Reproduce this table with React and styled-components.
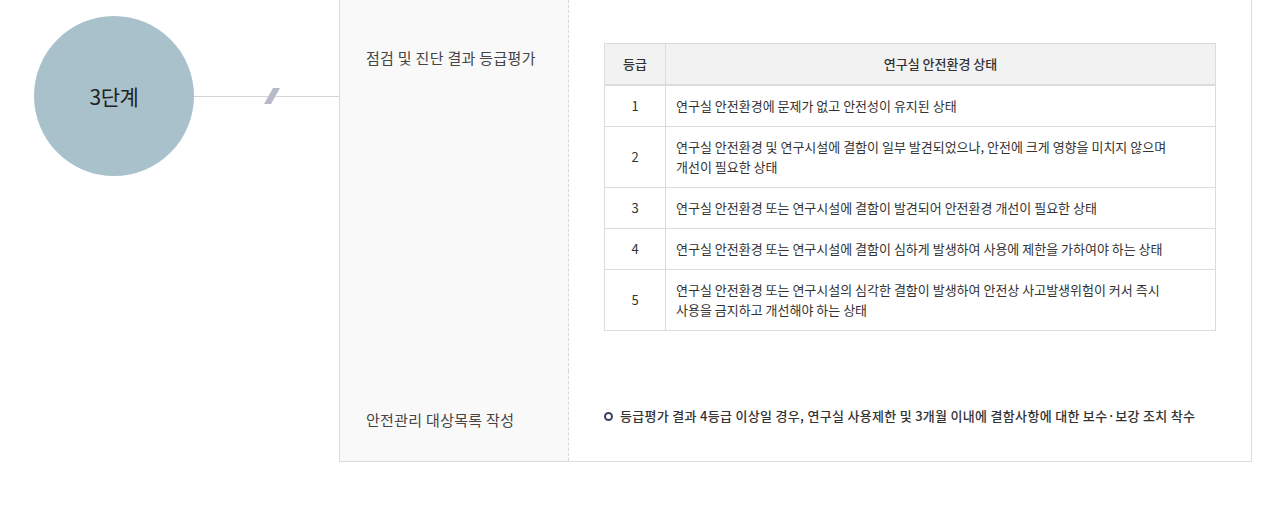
import React from 'react'
import styled, { createGlobalStyle } from 'styled-components'

const GlobalStyle = createGlobalStyle`
  body {
    margin: 0;
    background: #fff;
    font-family: "Noto Sans CJK KR", "Noto Sans", sans-serif;
    color: #333;
  }
`

const Stage = styled.div`
  width: 1263px;
  display: grid;
  grid-template-columns: 339px 913px;
  padding-bottom: 71px;
`

const Marker = styled.div`
  display: flex;
  align-items: center;
  height: 192px;
  padding-left: 34px;
`

const Circle = styled.div`
  width: 160px;
  height: 160px;
  flex: none;
  border-radius: 50%;
  background: #a8c1ca;
  display: flex;
  align-items: center;
  justify-content: center;
  font-size: 21px;
  color: #222;
  letter-spacing: -0.5px;
`

const Connector = styled.div`
  position: relative;
  flex: 1;
  height: 1px;
  background: #d4d4d4;
`

const Slash = styled.svg`
  position: absolute;
  left: 70px;
  top: -8px;
`

const Box = styled.div`
  display: grid;
  grid-template-columns: 229px 1fr;
  border: 1px solid #dcdcdc;
  border-top: none;
`

const Label = styled.div`
  background: #f9f9f9;
  border-right: 1px dashed #d8d8d8;
  padding: ${p => p.$top}px 26px 0;
  font-size: 15px;
  line-height: 20px;
  color: #444;
  letter-spacing: 0.3px;
`

const Content = styled.div`
  padding: ${p => p.$top}px 35px ${p => p.$bottom}px;
`

const Table = styled.table`
  width: 100%;
  border-collapse: collapse;
  border: 1px solid #dcdcdc;
  font-size: 13px;
  line-height: 20px;
  color: #333;
  word-break: keep-all;
`

const Th = styled.th`
  background: #f2f2f2;
  font-weight: 500;
  height: 40px;
  padding: 0 10px;
  border-right: 1px solid #dcdcdc;
  border-bottom: 2px solid #dcdcdc;
  width: ${p => p.$w || 'auto'};
`

const Td = styled.td`
  padding: 10px ${p => (p.$center ? 10 : 20)}px 10px 10px;
  border-right: 1px solid #dcdcdc;
  border-bottom: 1px solid #dcdcdc;
  text-align: ${p => (p.$center ? 'center' : 'left')};
`

const Bullet = styled.p`
  margin: 0;
  display: flex;
  align-items: center;
  gap: 7px;
  font-size: 13px;
  line-height: 20px;
  font-weight: 500;
  color: #333;
  letter-spacing: 0.3px;
  &::before {
    content: '';
    width: 5px;
    height: 5px;
    border: 2px solid #3b4060;
    border-radius: 50%;
    flex: none;
  }
`

const grades = [
  ['1', '연구실 안전환경에 문제가 없고 안전성이 유지된 상태'],
  ['2', '연구실 안전환경 및 연구시설에 결함이 일부 발견되었으나, 안전에 크게 영향을 미치지 않으며 개선이 필요한 상태'],
  ['3', '연구실 안전환경 또는 연구시설에 결함이 발견되어 안전환경 개선이 필요한 상태'],
  ['4', '연구실 안전환경 또는 연구시설에 결함이 심하게 발생하여 사용에 제한을 가하여야 하는 상태'],
  ['5', '연구실 안전환경 또는 연구시설의 심각한 결함이 발생하여 안전상 사고발생위험이 커서 즉시 사용을 금지하고 개선해야 하는 상태'],
]

export default function App() {
  return (
    <>
      <GlobalStyle />
      <Stage>
        <Marker>
          <Circle>3단계</Circle>
          <Connector>
            <Slash width="16" height="16" viewBox="0 0 16 16">
              <polygon points="9,0 16,0 7,16 0,16" fill="#b8bac8" />
            </Slash>
          </Connector>
        </Marker>
        <Box>
          <Label $top={48}>점검 및 진단 결과 등급평가</Label>
          <Content $top={43} $bottom={40}>
            <Table>
              <thead>
                <tr>
                  <Th $w="40px">등급</Th>
                  <Th>연구실 안전환경 상태</Th>
                </tr>
              </thead>
              <tbody>
                {grades.map(([g, text]) => (
                  <tr key={g}>
                    <Td $center>{g}</Td>
                    <Td>{text}</Td>
                  </tr>
                ))}
              </tbody>
            </Table>
          </Content>
          <Label $top={39}>안전관리 대상목록 작성</Label>
          <Content $top={35} $bottom={35}>
            <Bullet>등급평가 결과 4등급 이상일 경우, 연구실 사용제한 및 3개월 이내에 결함사항에 대한 보수·보강 조치 착수</Bullet>
          </Content>
        </Box>
      </Stage>
    </>
  )
}
